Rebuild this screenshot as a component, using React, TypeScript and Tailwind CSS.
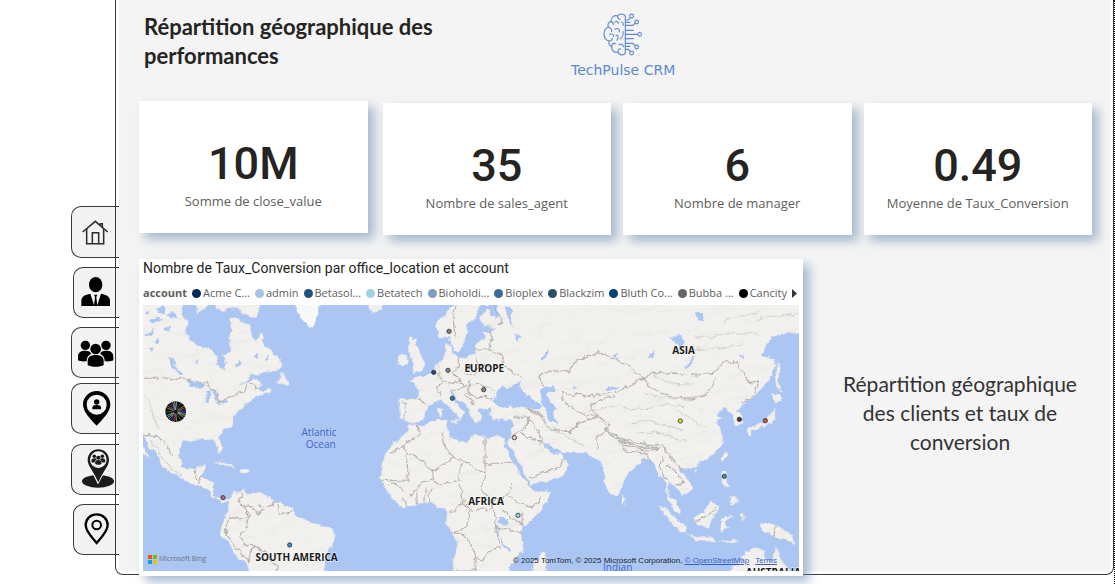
import React from "react";

const INK = "#2c2c2c";

function HomeIcon() {
  return (
    <svg viewBox="36 36 141 150" className="h-[50px] w-[47px]" fill="none" stroke={INK} strokeWidth="4.6">
      <path d="M68 111 L106 79 L143 111" />
      <path d="M80 102 V146 H131 V102" />
      <path d="M97 146 V113 H116 V146" />
      <path d="M121 91 V86 H127 V97" />
    </svg>
  );
}

function AgentIcon() {
  return (
    <svg viewBox="42 219 135 147" className="h-[49px] w-[45px]" fill="#000">
      <ellipse cx="107" cy="269" rx="20" ry="23" />
      <path d="M64 333 V317 C64 304 75 299 91 296 L103 333 Z" />
      <path d="M150 333 V317 C150 304 139 299 123 296 L111 333 Z" />
      <path d="M102 299 H112 L109 306 L112 333 H102 L105 306 Z" />
    </svg>
  );
}

function TeamShapes() {
  return (
    <>
      <circle cx="76" cy="451" r="14" />
      <circle cx="138" cy="451" r="14" />
      <path d="M54 496 V485 C54 472 62 467 76 467 C86 467 92 470 93 477 C84 481 80 488 80 499 C68 500 59 499 54 496 Z" />
      <path d="M160 496 V485 C160 472 152 467 138 467 C128 467 122 470 121 477 C130 481 134 488 134 499 C146 500 155 499 160 496 Z" />
      <circle cx="107" cy="462" r="16" />
      <path d="M83 510 V498 C83 486 92 480 107 480 C122 480 131 486 131 498 V510 C122 517 92 517 83 510 Z" />
    </>
  );
}

function TeamIcon() {
  return (
    <svg viewBox="36 399 141 147" className="h-[49px] w-[47px]" fill="#000">
      <TeamShapes />
    </svg>
  );
}

function AgentPinIcon() {
  return (
    <svg viewBox="36 28 141 147" className="h-[49px] w-[47px]" fill="#000">
      <path
        fillRule="evenodd"
        d="M110 49 C132 49 151 67 151 89 C151 112 128 134 110 153 C92 134 69 112 69 89 C69 67 88 49 110 49 Z M110 60 A30 30 0 1 0 110 120 A30 30 0 1 0 110 60 Z"
      />
      <circle cx="110" cy="82" r="8" />
      <path d="M97 104 V99 C97 93 102 91 110 91 C118 91 123 93 123 99 V104 Z" />
    </svg>
  );
}

function TeamPinIcon() {
  return (
    <svg viewBox="36 213 141 147" className="h-[49px] w-[47px]" fill="#1c1c1c">
      <ellipse cx="114" cy="322" rx="48" ry="19" />
      <path d="M92 282 L114 326 L137 282 Z" stroke="#f3f3f3" strokeWidth="5" />
      <path
        fillRule="evenodd"
        d="M115 226 C133 226 147 240 147 258 C147 276 130 290 115 325 C100 290 83 276 83 258 C83 240 97 226 115 226 Z M115 232 A25 25 0 1 0 115 282 A25 25 0 1 0 115 232 Z"
      />
      <g transform="translate(115 257) scale(.39) translate(-107 -477)">
        <TeamShapes />
      </g>
    </svg>
  );
}

function PlacePinIcon() {
  return (
    <svg viewBox="42 393 135 147" className="h-[49px] w-[45px]" fill="none" stroke="#000">
      <path d="M110 421 C128 421 143 434 143 453 C143 472 124 490 110 507 C96 490 77 472 77 453 C77 434 92 421 110 421 Z" strokeWidth="7" />
      <circle cx="110" cy="453" r="13" strokeWidth="6" />
    </svg>
  );
}

const tabs = [
  { label: "Accueil", href: "#accueil", icon: <HomeIcon />, cls: "h-[52px] w-12" },
  { label: "Agents", href: "#agents", icon: <AgentIcon />, cls: "mt-[9px] h-[51px] w-[46px]" },
  { label: "Équipes", href: "#equipes", icon: <TeamIcon />, cls: "mt-[9px] h-[51px] w-12" },
  { label: "Localisation des agents", href: "#carte-agents", icon: <AgentPinIcon />, cls: "mt-[5px] h-[51px] w-12" },
  { label: "Localisation des équipes", href: "#carte-equipes", icon: <TeamPinIcon />, cls: "mt-[10px] h-[51px] w-12" },
  { label: "Carte", href: "#carte", icon: <PlacePinIcon />, cls: "mt-[9px] h-[51px] w-[46px]" },
];

function SideTabs() {
  return (
    <nav className="-mr-1 flex w-[119px] shrink-0 flex-col items-end pt-[206px]">
      {tabs.map((t) => (
        <a
          key={t.href}
          href={t.href}
          aria-label={t.label}
          className={"block overflow-hidden rounded-l-[10px] border-y border-l border-[#3a3a3a] bg-[#f3f3f3] " + t.cls}
        >
          {t.icon}
        </a>
      ))}
    </nav>
  );
}

function Logo() {
  return (
    <div className="flex flex-col items-center text-[#6089d0]">
      <svg viewBox="160 36 120 132" className="h-11 w-10" fill="none" stroke="currentColor" strokeWidth="3.4" strokeLinecap="round">
        <path d="M227 48 C222 40 208 40 204 48 C194 44 184 52 184 64 C176 66 173 74 176 81 C166 85 163 94 163 102 C163 112 169 121 178 123 C176 132 181 139 186 140 C186 152 194 159 205 156 C209 167 223 167 227 158 Z" />
        <path d="M204 48 C203 54 207 58 212 58 M184 64 C189 66 192 70 191 74 M196 66 C202 62 206 66 206 70 M215 66 C221 66 222 72 220 76 M176 81 C184 84 187 90 186 95 M196 88 C203 82 212 88 209 96 M180 103 C187 100 193 104 192 110 M178 123 C183 123 187 120 188 116 M199 106 C206 104 207 112 202 121 M220 94 C222 104 218 114 211 117 M186 140 C186 132 192 128 198 131 M208 134 C214 130 221 134 221 140 M205 156 C204 150 208 145 213 147" />
        <path d="M227 60 H236 L242 53 M227 67 H241 M227 76 H249 L257 69 M227 91 H251 M227 103 H263 M227 116 H251 M227 130 H249 L257 137 M227 139 H241 M227 148 H236 L242 154" />
        <circle cx="246" cy="48" r="5.5" />
        <circle cx="261" cy="66" r="5.5" />
        <circle cx="270" cy="103" r="5.5" />
        <circle cx="261" cy="141" r="5.5" />
        <circle cx="246" cy="159" r="5.5" />
      </svg>
      <span className="mt-1 font-['DejaVu_Sans',sans-serif] text-[14px] leading-5">TechPulse CRM</span>
    </div>
  );
}

const SHADOW = "shadow-[6px_6px_10px_0_rgba(110,143,178,0.6)]";

function KpiCard({ value, label, cls }: { value: string; label: string; cls: string }) {
  return (
    <section className={"flex h-[132px] flex-1 flex-col items-center bg-white pt-[37px] " + SHADOW + " " + cls}>
      <span className="font-[Roboto,sans-serif] text-[45px] leading-[51px] font-medium text-[#252423]">{value}</span>
      <span className="font-['Open_Sans',sans-serif] text-[13px] leading-6 text-[#605e5c]">{label}</span>
    </section>
  );
}

const legend = [
  ["Acme C...", "#012a5c"],
  ["admin", "#a5c5e3"],
  ["Betasol...", "#20507f"],
  ["Betatech", "#a0d3e4"],
  ["Bioholdi...", "#7e9fc0"],
  ["Bioplex", "#3a6b9c"],
  ["Blackzim", "#2f4f68"],
  ["Bluth Co...", "#00437a"],
  ["Bubba ...", "#666666"],
  ["Cancity", "#000000"],
];

const land = [
  // North America and Central America
  "M30 155 H165 L152 192 L175 215 L168 250 L180 275 L215 290 L245 305 L262 320 L262 345 L280 360 L290 345 L283 320 L300 300 L298 270 L305 240 L295 210 L310 205 L335 215 L360 225 L362 250 L375 270 L395 250 L405 285 L425 300 L440 320 L458 345 L440 362 L400 370 L365 375 L345 390 L325 408 L350 395 L390 388 L395 400 L380 418 L400 425 L425 418 L420 430 L385 442 L375 438 L355 455 L345 470 L325 485 L308 500 L305 525 L275 545 L268 565 L278 600 L275 612 L262 600 L255 575 L235 570 L205 568 L195 573 L160 575 L148 595 L150 630 L160 655 L195 660 L205 645 L228 645 L222 662 L215 680 L235 692 L253 700 L248 730 L262 745 L285 748 L305 740 L300 755 L270 752 L250 742 L235 720 L205 708 L165 690 L125 670 L95 650 L85 620 L60 590 L45 560 L30 550 Z",
  "M30 575 L44 598 L60 628 L50 622 L30 600 Z",
  "M255 155 H392 L384 178 L380 207 L350 195 L325 178 L300 172 L270 184 Z",
  "M195 155 L240 155 L222 176 L205 190 Z",
  "M455 368 L470 385 L482 400 L472 408 L450 402 L438 396 L450 380 Z",
  "M250 632 L272 634 L300 645 L318 653 L298 652 L270 640 Z",
  "M330 655 L348 655 L362 664 L342 670 L328 667 Z",
  // South America
  "M300 745 L310 730 L325 727 L342 718 L350 733 L380 730 L410 733 L425 752 L460 765 L490 773 L498 795 L515 812 L550 820 L590 828 L612 845 L615 865 L600 895 L588 925 L580 975 H362 L350 940 L320 920 L300 890 L285 865 L272 845 L280 810 L297 785 L300 760 Z",
  // Iceland
  "M710 155 H768 L755 180 L735 187 L718 178 Z",
  // British Isles
  "M838 264 L860 263 L858 285 L866 300 L875 330 L888 345 L880 360 L845 368 L853 350 L845 320 L835 290 Z",
  "M805 320 L830 312 L832 335 L817 350 L803 344 Z",
  // Scandinavia
  "M918 215 L945 195 L975 155 H1058 L1035 195 L1014 225 L1012 250 L1000 275 L990 300 L975 307 L965 275 L955 262 L930 264 L918 240 Z",
  // Eurasia
  "M808 445 L855 448 L865 440 L868 420 L845 390 L862 380 L885 378 L905 362 L925 345 L940 325 L943 300 L948 278 L962 290 L965 312 L985 320 L1010 322 L1035 315 L1038 290 L1050 275 L1065 270 L1058 250 L1085 242 L1100 232 L1066 228 L1050 205 L1070 180 L1070 155 H2020 V246 L1965 250 L1930 262 L1905 290 L1895 320 L1930 325 L1935 345 L1922 380 L1900 410 L1870 440 L1850 455 L1832 462 L1820 480 L1836 500 L1838 517 L1815 525 L1808 498 L1792 478 L1780 475 L1760 490 L1778 503 L1757 515 L1765 530 L1775 550 L1780 575 L1765 600 L1745 620 L1715 635 L1690 648 L1665 652 L1648 652 L1655 668 L1680 690 L1688 710 L1680 725 L1655 738 L1648 722 L1630 705 L1615 700 L1615 730 L1640 760 L1652 792 L1635 780 L1615 747 L1610 710 L1600 680 L1585 682 L1575 645 L1560 632 L1545 625 L1530 640 L1500 665 L1480 690 L1475 715 L1470 730 L1455 742 L1440 730 L1425 695 L1420 650 L1410 640 L1395 625 L1370 610 L1340 608 L1300 605 L1275 595 L1250 583 L1235 572 L1252 600 L1270 615 L1295 606 L1300 625 L1320 640 L1310 660 L1290 680 L1245 695 L1205 706 L1195 690 L1175 650 L1150 610 L1132 578 L1140 560 L1147 530 L1145 512 L1120 508 L1090 510 L1078 490 L1085 472 L1060 478 L1045 478 L1052 500 L1045 520 L1035 515 L1020 490 L1010 470 L985 450 L970 430 L956 426 L965 450 L985 470 L1005 485 L1000 495 L990 512 L985 500 L970 480 L950 465 L935 447 L915 455 L900 460 L895 480 L880 490 L875 513 L845 522 L830 510 L812 508 L812 480 Z",
  // Mediterranean islands
  "M962 512 L984 510 L980 522 Z",
  "M925 475 L938 473 L936 495 L926 497 Z",
  // Africa
  "M835 524 L870 527 L905 515 L945 508 L956 515 L950 535 L960 560 L990 572 L1010 578 L1022 560 L1050 557 L1080 560 L1125 560 L1128 590 L1140 620 L1160 655 L1175 680 L1195 705 L1207 722 L1235 728 L1258 722 L1255 745 L1230 780 L1200 810 L1178 830 L1172 850 L1180 900 L1160 925 L1140 945 L1130 975 H975 L968 930 L985 895 L972 860 L965 840 L945 815 L950 790 L945 775 L925 770 L900 755 L880 760 L850 770 L820 772 L790 750 L775 725 L755 700 L750 685 L758 655 L755 640 L775 600 L800 575 L810 560 L828 545 Z",
  "M1245 903 L1252 925 L1240 975 H1208 L1212 940 Z",
  // Japan and Sakhalin
  "M1852 538 L1880 525 L1908 518 L1922 485 L1935 475 L1934 508 L1925 522 L1890 532 L1864 540 L1860 558 L1852 550 Z",
  "M1928 430 L1958 445 L1938 458 L1926 448 Z",
  "M1938 332 L1950 355 L1948 400 L1955 428 L1942 420 L1938 370 Z",
  // South-east Asia
  "M1785 610 L1788 620 L1779 637 L1772 625 Z",
  "M1692 656 L1704 657 L1698 667 Z",
  "M1775 660 L1788 665 L1790 685 L1800 712 L1780 702 L1773 683 Z",
  "M1795 738 L1818 735 L1824 752 L1814 764 L1800 755 Z",
  "M1475 738 L1487 752 L1480 764 L1474 755 Z",
  "M1588 765 L1610 778 L1640 808 L1665 828 L1668 848 L1645 840 L1615 810 L1600 785 Z",
  "M1672 852 L1710 860 L1750 866 L1752 877 L1700 870 Z",
  "M1765 871 L1800 872 L1835 874 L1800 880 Z",
  "M1693 800 L1720 785 L1746 755 L1765 770 L1752 800 L1740 832 L1705 828 Z",
  "M1775 805 L1812 797 L1785 812 L1795 835 L1784 832 L1775 848 L1768 830 Z",
  "M1835 790 L1844 800 L1838 815 Z",
  "M1888 826 L1915 818 L1950 830 L1980 855 L2000 882 L1970 872 L1945 865 L1920 855 L1900 840 Z",
  // Australia
  "M1775 975 L1830 940 L1845 910 L1870 895 L1905 902 L1900 920 L1925 945 L1935 888 L1950 925 L1985 975 Z",
];

const water = [
  // Great Lakes
  "M165 390 L200 392 L228 405 L215 413 L188 408 Z",
  "M228 425 L240 424 L236 458 L224 458 Z",
  "M240 415 L268 430 L262 440 L262 456 L248 435 Z",
  "M255 462 L286 450 L292 456 L264 466 Z",
  // Canadian lakes
  "M115 325 L132 328 L138 350 L158 372 L148 375 L128 352 Z",
  "M60 210 L92 200 L100 210 L70 222 Z",
  "M72 175 L100 172 L110 188 L88 190 Z",
  "M45 250 L75 238 L70 250 L50 258 Z",
  "M45 195 L62 178 L58 196 Z",
  "M72 270 L85 266 L82 285 Z",
  "M100 235 L118 228 L112 245 Z",
  "M58 298 L70 294 L66 306 Z",
  "M110 192 L135 186 L140 200 L120 205 Z",
  "M365 318 L385 312 L380 328 Z",
  "M318 346 L330 332 L335 340 L324 355 Z",
  "M398 322 L420 316 L410 330 Z",
  "M195 335 L206 330 L204 342 Z",
  // Black Sea and Azov
  "M1090 456 L1100 425 L1118 410 L1138 415 L1150 405 L1172 395 L1168 410 L1188 432 L1236 464 L1222 478 L1180 468 L1135 470 L1110 474 Z",
  // Caspian Sea
  "M1228 420 L1238 410 L1268 407 L1276 422 L1254 432 L1262 455 L1282 475 L1270 490 L1282 515 L1258 516 L1246 480 L1232 450 Z",
  // Gulfs and inland seas
  "M1066 165 L1100 165 L1110 190 L1100 208 L1084 196 Z",
  "M1124 165 L1140 172 L1150 230 L1136 212 Z",
  "M1150 250 L1170 262 L1160 272 Z",
  "M1235 325 L1255 300 L1252 312 L1242 330 Z",
  "M1425 415 L1470 408 L1462 416 L1430 424 Z",
  "M1322 408 L1340 410 L1328 416 Z",
  "M1660 352 L1690 322 L1700 316 L1682 342 L1666 356 Z",
  "M1615 262 L1655 258 L1660 295 L1650 300 L1640 276 Z",
  "M1695 185 L1715 190 L1718 210 L1702 208 Z",
  "M1560 308 L1574 302 L1566 325 L1556 320 Z",
  "M1448 312 L1466 310 L1460 324 Z",
  "M1822 318 L1840 315 L1838 325 Z",
  "M1108 800 L1130 803 L1136 822 L1120 828 L1108 818 Z",
  "M1110 865 L1116 865 L1140 905 L1134 908 Z",
  "M1098 832 L1102 832 L1108 860 L1102 862 Z",
];

const borders = [
  "M39 385 H165 L190 395 M205 398 L230 400 L262 430 L265 460 L300 440 L340 425 L350 402 L372 405 L380 420",
  "M39 555 L85 560 L108 590 L130 615 M195 662 L200 690 M215 680 L205 705",
  "M340 730 L325 760 L350 770 L372 775 L380 790 L400 780 L385 762 L420 770 L430 755 M440 765 L450 795 L480 790 L492 778 M350 770 L358 800 L330 810 L300 800 M300 800 L288 830 M358 800 L345 840 L330 860 L350 885 L375 888 L388 900 L420 915 L418 930 L445 950 L440 963 M375 888 L360 910 L355 940",
  // Europe
  "M975 165 L970 210 L975 262 M865 447 L895 462 M905 365 L925 375 L940 395 L925 412 L935 440 M925 345 L928 372 M940 395 L965 400 L990 390 L1000 410 L975 420 L960 425 M985 320 L985 350 L968 368 L990 390 M1035 320 L1045 350 L1035 375 L1005 370 M1000 410 L1040 400 L1065 410 L1095 420 M1020 395 L1015 425 L1035 445 L1065 440 L1090 445 M1010 430 L1030 465 M1035 300 L1075 300 L1090 270 M1075 300 L1110 310 L1120 335 L1110 350 L1050 345 M1120 345 L1155 370 L1178 385 M815 455 L828 462 L825 508",
  "M1088 270 L1080 240 M1090 165 L1108 190 L1112 225",
  // Central Asia and Russia
  "M1235 410 L1225 380 L1255 360 L1310 365 L1335 335 L1400 308 L1455 325 L1500 355 L1540 380 L1520 395 L1485 415 L1455 430 L1380 440 L1345 430 L1330 440 L1300 425 L1295 455 L1345 480 L1365 500 L1400 495 L1385 470 L1410 450 L1450 440",
  "M1540 380 L1600 365 L1625 370 L1700 375 L1750 370 L1780 335 L1820 335 L1860 400 L1885 395 L1865 445 L1835 455",
  "M1540 380 L1560 410 L1620 440 L1700 445 L1740 420 L1755 380",
  "M1195 475 L1240 505 L1260 540 L1320 545 L1350 520 L1400 500 L1440 520 L1430 545 L1400 560 L1405 600",
  "M1430 545 L1480 585 L1560 605 L1600 590 L1620 620 M1480 590 L1485 600 L1550 612 M1550 612 L1560 640 M1598 615 L1590 650 L1610 690 M1620 620 L1640 645 L1660 655 M1612 645 L1640 670 L1660 700 L1635 705",
  "M1150 505 L1195 505 L1220 540 L1238 572 M1145 560 L1165 545 L1205 565 L1235 578 M1200 680 L1240 670 L1290 650 L1300 625 M1200 500 L1185 535 L1155 550",
  // Africa
  "M865 525 L870 555 L815 590 L908 662 L968 625 L940 580 L935 550 M815 590 L780 610 M830 615 L835 690 L790 692 L752 690 M968 625 L995 628 L1065 670 V560 M908 662 L910 690 L880 695 L855 720 L840 740 M995 628 L990 690 L925 705 L910 690 M1065 640 H1150 M1065 670 L1055 720 L1085 750 L1130 740 L1145 700 M990 705 L1000 760 L960 790 M1085 750 L1090 775 L1020 780 L1000 760 M820 740 L830 770 M860 725 L862 765 M885 715 L885 758 M905 712 L895 755 M775 705 L800 700 L820 725 M1020 780 L1010 830 L970 850 M1090 775 L1098 810 L1095 850 L1115 890 M975 850 L1010 860 L1030 900 L1040 963 M1115 890 L1080 900 L1060 930 L1030 925 M1098 840 L1135 835 L1175 850 M1120 775 L1140 800 L1180 825 M1135 740 L1170 760 L1210 775 L1235 745 M1040 963 H975 M1175 785 L1178 830",
  "M1700 810 L1735 795 L1758 775 M1935 825 L1932 865",
];

const ridges = [
  "M1440 555 C1470 580 1510 592 1580 592",
  "M1425 535 C1470 572 1530 585 1600 584",
  "M1460 560 C1490 582 1540 596 1590 598",
  "M1185 470 C1210 478 1225 485 1240 500",
  "M285 830 C290 870 330 910 360 935",
];

const relief = [
  "M1400 500 L1440 540",
  "M1360 490 C1400 470 1430 480 1470 462",
  "M1480 470 C1540 490 1600 450 1660 470",
  "M1540 430 C1580 450 1640 440 1690 450",
  "M1500 520 C1550 500 1600 520 1660 545",
  "M1520 550 C1570 540 1620 555 1670 575",
  "M1640 480 C1680 500 1700 520 1730 530",
  "M1560 370 C1600 400 1650 405 1690 400",
  "M60 570 C90 600 100 640 150 675",
  "M45 440 C70 460 60 500 90 540",
  "M1690 300 C1740 290 1790 300 1840 280",
  "M1700 260 C1760 270 1820 240 1880 250",
  "M1880 210 C1920 190 1960 205 2007 190",
  "M1780 215 C1820 195 1850 205 1890 180",
  "M1270 530 C1300 560 1330 570 1360 590",
];

const pins: [number, number, string][] = [
  [957, 244, "#8d7f86"],
  [911, 367, "#34406e"],
  [954, 361, "#85868a"],
  [1018, 350, "#26355e"],
  [967, 445, "#347d89"],
  [1061, 419, "#8a8472"],
  [1153, 563, "#e9c6b3"],
  [1651, 513, "#d8dc2a"],
  [1828, 508, "#5a2c32"],
  [1906, 512, "#c9563e"],
  [1783, 679, "#4d86ab"],
  [1164, 796, "#86d3e8"],
  [279, 743, "#b5627c"],
  [479, 885, "#3f88c4"],
];

const pieColors = ["#4346a8", "#a08c3a", "#1b1b1b", "#6fa2c8", "#b45c4a", "#2f6b3c", "#c9c15a", "#5b3a7d", "#101010", "#8fa0b8"];

function MarketPie() {
  return (
    <g>
      <circle cx="137" cy="485" r="31" fill="#0b0b0d" />
      {Array.from({ length: 30 }, (_, i) => {
        const a = (i / 30) * Math.PI * 2;
        return (
          <line
            key={i}
            x1={137 + 6 * Math.cos(a)}
            y1={485 + 6 * Math.sin(a)}
            x2={137 + 30 * Math.cos(a)}
            y2={485 + 30 * Math.sin(a)}
            stroke={pieColors[(i * 3) % pieColors.length]}
            strokeWidth="2.6"
          />
        );
      })}
    </g>
  );
}

function WorldMap() {
  return (
    <svg viewBox="39 165 1968 798" preserveAspectRatio="xMidYMid slice" className="block h-[266px] w-full bg-[#abc6f2]" role="img" aria-label="Carte du monde">
      <defs>
        <filter id="coast" x="0" y="0" width="100%" height="100%">
          <feTurbulence type="fractalNoise" baseFrequency="0.045" numOctaves="3" seed="4" result="n" />
          <feDisplacementMap in="SourceGraphic" in2="n" scale="20" xChannelSelector="R" yChannelSelector="G" />
        </filter>
        <filter id="terrain" x="0" y="0" width="100%" height="100%">
          <feTurbulence type="fractalNoise" baseFrequency="0.012 0.022" numOctaves="4" seed="9" result="t" />
          <feDiffuseLighting in="t" surfaceScale="9" diffuseConstant="1.1" lightingColor="#fff" result="lit">
            <feDistantLight azimuth="225" elevation="62" />
          </feDiffuseLighting>
          <feComposite in="lit" in2="SourceGraphic" operator="in" />
        </filter>
      </defs>
      <rect x="0" y="100" width="2100" height="900" fill="#abc6f2" />
      <g filter="url(#coast)">
        <path d={land.join(" ")} fill="#f0efec" stroke="#dcdfe4" strokeWidth="1.5" />
        <path d="M498 150 H578 L565 190 L555 215 L548 238 L535 225 L515 205 L503 190 Z" fill="#f8f8f8" />
        <g filter="url(#terrain)" opacity="0.14">
          <path d={land.join(" ")} fill="#000" />
        </g>
        <path d={relief.join(" ")} fill="none" stroke="#c2c0bc" strokeWidth="3.5" opacity="0.6" />
        <path d={ridges.join(" ")} fill="none" stroke="#a19f9b" strokeWidth="4.5" opacity="0.7" />
        <path d={water.join(" ")} fill="#abc6f2" />
        <path d={borders.join(" ")} fill="none" stroke="#b4b0ad" strokeWidth="3.2" />
      </g>
      <MarketPie />
      {pins.map(([x, y, c]) => (
        <circle key={x} cx={x} cy={y} r="6.5" fill={c} stroke="#2b3440" strokeOpacity="0.85" strokeWidth="2.8" />
      ))}
      <g fontFamily="'Open Sans', sans-serif" fontSize="30" fontWeight="700" fill="#1a1a1a" stroke="#fff" strokeOpacity="0.6" strokeWidth="4" paintOrder="stroke" textAnchor="middle">
        <text x="1063" y="365">EUROPE</text>
        <text x="1661" y="312">ASIA</text>
        <text x="1068" y="764">AFRICA</text>
        <text x="500" y="933">SOUTH AMERICA</text>
        <text x="1930" y="978">AUSTRALIA</text>
      </g>
      <g fontFamily="'Open Sans', sans-serif" fontSize="30" fill="#4166c8" textAnchor="middle">
        <text x="567" y="557">Atlantic</text>
        <text x="572" y="593">Ocean</text>
        <text x="1463" y="962">Indian</text>
      </g>
    </svg>
  );
}

function MapCard() {
  return (
    <section className={"relative z-10 -mb-[5px] h-[317px] w-[664px] shrink bg-white px-1 " + SHADOW}>
      <h2 className="font-[Roboto,sans-serif] text-[14px] leading-[19px] text-[#252423]">
        Nombre de Taux_Conversion par office_location et account
      </h2>
      <div className="flex h-[27px] items-center justify-between pt-1 pr-[2px] pb-px font-['Open_Sans',sans-serif] text-[11px] text-[#605e5c]">
        <span className="font-bold">account</span>
        {legend.map(([name, color]) => (
          <span key={name} className="flex items-center gap-[2px] whitespace-nowrap">
            <i className="size-[9px] rounded-full" style={{ backgroundColor: color }} />
            {name}
          </span>
        ))}
        <button aria-label="Suivant" className="flex">
          <svg viewBox="0 0 5 9" className="h-[9px] w-[5px]"><path d="M0 0 L5 4.5 L0 9 Z" fill="#333" /></svg>
        </button>
      </div>
      <div className="relative">
        <WorldMap />
        <div className="absolute bottom-[6px] left-[5px] flex items-center gap-[2px] font-['Open_Sans',sans-serif] text-[7px] leading-3 text-[#6d7580]">
          <span className="grid grid-cols-2 gap-px">
            <i className="size-1 bg-[#f25022]" />
            <i className="size-1 bg-[#7fba00]" />
            <i className="size-1 bg-[#00a4ef]" />
            <i className="size-1 bg-[#ffb900]" />
          </span>
          Microsoft Bing
        </div>
        <div className="absolute right-[22px] bottom-1 flex font-['Liberation_Sans',sans-serif] text-[8px] leading-3 whitespace-pre text-[#222]">
          © 2025 TomTom, © 2025 Microsoft Corporation,{" "}
          <a href="#osm" className="text-[#3a5fc4] underline">© OpenStreetMap</a>
          <a href="#terms" className="ml-[6px] text-[#3a5fc4] underline">Terms</a>
        </div>
      </div>
    </section>
  );
}

export default function App() {
  return (
    <div className="flex min-h-screen items-start overflow-hidden border-r border-dotted border-black bg-white">
      <SideTabs />
      <main className="min-w-0 flex-1 rounded-b-[8px] border-x border-b border-[#3a3a3a] px-[3px] pb-[3px]">
        <div className="flex h-[571px] flex-col bg-[#f4f4f4] pl-5">
          <header className="flex h-[101px] shrink-0">
            <h1 className="w-[420px] max-w-full pt-3 pl-[5px] font-[Lato,sans-serif] text-[22px] leading-[29px] font-bold text-[#252423]">
              Répartition géographique des
              <br />
              performances
            </h1>
            <div className="pt-3 pl-3">
              <Logo />
            </div>
          </header>
          <div className="flex shrink-0 items-start gap-3 pr-[18px]">
            <KpiCard value="10M" label="Somme de close_value" cls="mr-[3px]" />
            <KpiCard value="35" label="Nombre de sales_agent" cls="mt-[2px]" />
            <KpiCard value="6" label="Nombre de manager" cls="mt-[2px]" />
            <KpiCard value="0.49" label="Moyenne de Taux_Conversion" cls="mt-[2px]" />
          </div>
          <div className="mt-6 flex">
            <MapCard />
            <p className="min-w-0 flex-1 pt-[110px] pl-[7px] text-center font-[Lato,sans-serif] text-[21px] leading-[29px] text-[#333]">
              Répartition géographique
              <br />
              des clients et taux de
              <br />
              conversion
            </p>
          </div>
        </div>
      </main>
    </div>
  );
}
